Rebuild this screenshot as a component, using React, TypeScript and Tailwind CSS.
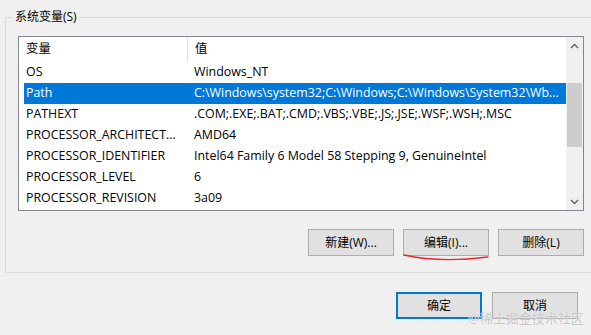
const rows = [
  { name: "OS", value: "Windows_NT" },
  {
    name: "Path",
    value: "C:\\Windows\\system32;C:\\Windows;C:\\Windows\\System32\\Wb...",
    selected: true,
  },
  { name: "PATHEXT", value: ".COM;.EXE;.BAT;.CMD;.VBS;.VBE;.JS;.JSE;.WSF;.WSH;.MSC" },
  { name: "PROCESSOR_ARCHITECT...", value: "AMD64" },
  {
    name: "PROCESSOR_IDENTIFIER",
    value: "Intel64 Family 6 Model 58 Stepping 9, GenuineIntel",
  },
  { name: "PROCESSOR_LEVEL", value: "6" },
  { name: "PROCESSOR_REVISION", value: "3a09" },
];

function Button({ label, primary }: { label: string; primary?: boolean }) {
  return (
    <button
      className={
        "flex h-[27px] w-[86px] items-center justify-center bg-[#e1e1e1] text-[12px] text-black " +
        (primary ? "border-2 border-[#0078d7]" : "border border-[#adadad]")
      }
    >
      {label}
    </button>
  );
}

export default function App() {
  return (
    <div
      className="relative h-[335px] w-[591px] overflow-hidden bg-[#f0f0f0] text-[12px] text-black"
      style={{ fontFamily: '"Open Sans", "Noto Sans CJK SC", sans-serif' }}
    >
      <div className="pt-[17px] pl-[5px]">
        {/* group box */}
        <div className="relative w-[620px] border-t border-b border-l border-[#dcdcdc] pt-[18px] pl-[12px] pb-[16px]">
          <span className="absolute -top-[10px] left-[7px] bg-[#f0f0f0] px-[2px] leading-[18px]">
            系统变量(S)
          </span>

          <div className="flex h-[175px] w-[566px] border border-[#828790] bg-white text-[12.4px]">
            <div className="flex-1">
              <div className="flex h-[25px] items-center">
                <div className="flex h-full w-[168px] items-center pl-[7px]">变量</div>
                <div className="h-full w-px bg-[#e5e5e5]" />
                <div className="pl-[7px]">值</div>
              </div>
              {rows.map((r) => (
                <div
                  key={r.name}
                  className={
                    "ml-[5px] flex h-[21px] items-center whitespace-nowrap " +
                    (r.selected ? "bg-[#0078d7] text-white" : "")
                  }
                >
                  <div className="w-[170px] pl-[2px]">{r.name}</div>
                  <div className="overflow-hidden">{r.value}</div>
                </div>
              ))}
            </div>

            {/* scrollbar */}
            <div className="flex w-[17px] flex-col bg-[#f0f0f0]">
              <div className="flex h-[17px] items-center justify-center text-[#606060]">
                <svg width="9" height="6" viewBox="0 0 9 6">
                  <path d="M1 5 L4.5 1.5 L8 5" fill="none" stroke="currentColor" strokeWidth="1.4" />
                </svg>
              </div>
              <div className="mx-[1px] mt-[29px] h-[64px] bg-[#cdcdcd]" />
              <div className="flex-1" />
              <div className="flex h-[17px] items-center justify-center text-[#606060]">
                <svg width="9" height="6" viewBox="0 0 9 6">
                  <path d="M1 1 L4.5 4.5 L8 1" fill="none" stroke="currentColor" strokeWidth="1.4" />
                </svg>
              </div>
            </div>
          </div>

          <div className="mt-[18px] flex w-[566px] justify-end gap-[9px]">
            <Button label="新建(W)..." />
            <Button label="编辑(I)..." />
            <Button label="删除(L)" />
          </div>
        </div>
      </div>

      <div className="mt-[19px] flex justify-end gap-[10px] pr-[13px]">
        <Button label="确定" primary />
        <Button label="取消" />
      </div>

      {/* red hand-drawn underline */}
      <svg className="absolute left-0 top-0" width="591" height="335">
        <path
          d="M404 255 Q 440 263 488 257"
          fill="none"
          stroke="#e8282b"
          strokeWidth="1.3"
          strokeLinecap="round"
        />
      </svg>

      {/* watermark */}
      <div
        className="absolute left-[468px] top-[309px] text-[13px] text-[#b8b8b8]/80"
        style={{ textShadow: "0 0 1px #ffffff" }}
      >
        @稀土掘金技术社区
      </div>
    </div>
  );
}
